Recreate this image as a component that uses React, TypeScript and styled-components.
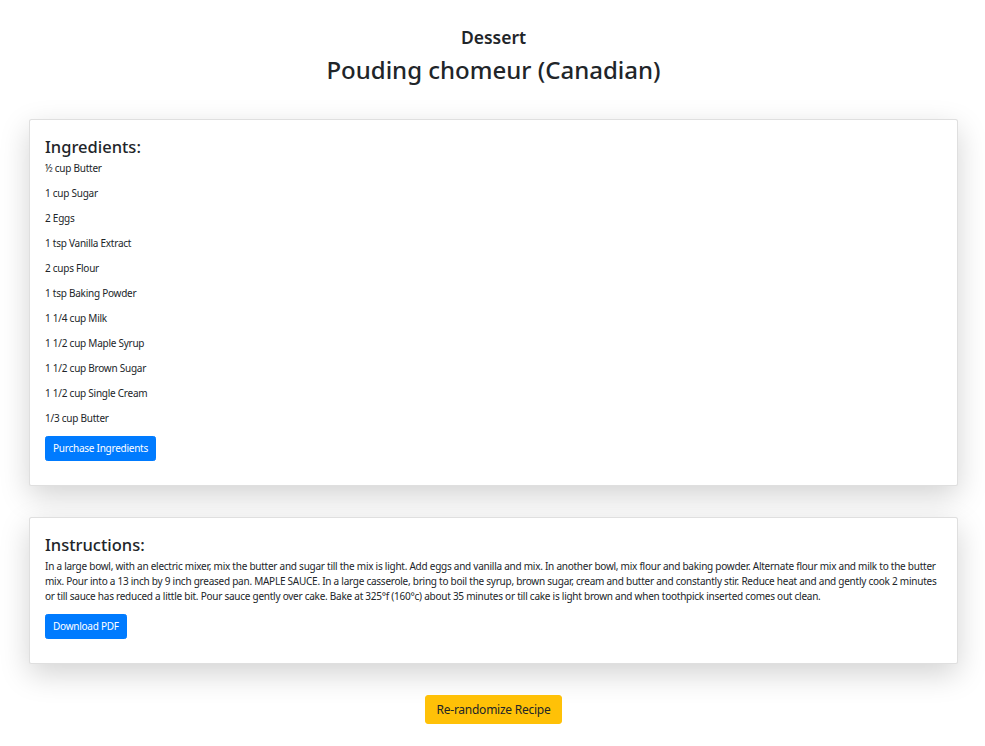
import styled, { createGlobalStyle } from 'styled-components';

const GlobalStyle = createGlobalStyle`
  html, body {
    margin: 0;
    padding: 0;
    background: #fff;
  }
  body {
    font-family: "Noto Sans", "Open Sans", sans-serif;
    color: #212529;
    font-size: 10px;
    line-height: 1.5;
  }
`;

const Page = styled.div`
  padding: 27px 27px 22px 29px;
  display: flex;
  flex-direction: column;
  align-items: stretch;
`;

const Header = styled.header`
  text-align: center;
  margin-bottom: 34px;
`;

const Category = styled.h3`
  margin: 0 0 7px;
  font-size: 17.5px;
  font-weight: 600;
  line-height: 1.2;
`;

const Title = styled.h1`
  margin: 0;
  font-size: 24px;
  font-weight: 500;
  line-height: 30px;
`;

const Card = styled.section`
  background: #fff;
  border: 1px solid rgba(0, 0, 0, 0.125);
  border-radius: 2.5px;
  box-shadow: 0 10px 30px rgba(0, 0, 0, 0.175);
  padding: 16px 15px 14px;
  margin-bottom: 31px;
`;

const CardTitle = styled.h3`
  margin: 0 0 4px;
  font-size: 16.5px;
  font-weight: 500;
  line-height: 21px;
`;

const Text = styled.p`
  margin: 0 0 10px;
  font-size: 10px;
  line-height: 15px;
  letter-spacing: -0.25px;
`;

const ButtonRow = styled.div`
  margin-bottom: 10px;
`;

const Button = styled.button<{ $variant?: 'primary' | 'warning'; $large?: boolean }>`
  font-family: inherit;
  display: inline-block;
  border: 1px solid ${(p) => (p.$variant === 'warning' ? '#ffc107' : '#007bff')};
  background: ${(p) => (p.$variant === 'warning' ? '#ffc107' : '#007bff')};
  color: ${(p) => (p.$variant === 'warning' ? '#212529' : '#fff')};
  font-size: ${(p) => (p.$large ? '12px' : '10px')};
  line-height: ${(p) => (p.$large ? '18px' : '15px')};
  letter-spacing: -0.25px;
  padding: ${(p) => (p.$large ? '4.5px 10.5px' : '4px 7px')};
  border-radius: ${(p) => (p.$large ? '3px' : '2.5px')};
  cursor: pointer;
`;

const Footer = styled.div`
  display: flex;
  justify-content: center;
`;

const ingredients = [
  '½ cup Butter',
  '1 cup Sugar',
  '2 Eggs',
  '1 tsp Vanilla Extract',
  '2 cups Flour',
  '1 tsp Baking Powder',
  '1 1/4 cup Milk',
  '1 1/2 cup Maple Syrup',
  '1 1/2 cup Brown Sugar',
  '1 1/2 cup Single Cream',
  '1/3 cup Butter',
];

const instructions =
  'In a large bowl, with an electric mixer, mix the butter and sugar till the mix is light. Add eggs and vanilla and mix. In another bowl, mix flour and baking powder. Alternate flour mix and milk to the butter mix. Pour into a 13 inch by 9 inch greased pan. MAPLE SAUCE. In a large casserole, bring to boil the syrup, brown sugar, cream and butter and constantly stir. Reduce heat and and gently cook 2 minutes or till sauce has reduced a little bit. Pour sauce gently over cake. Bake at 325°f (160°c) about 35 minutes or till cake is light brown and when toothpick inserted comes out clean.';

const App = () => {
  return (
    <>
      <GlobalStyle />
      <Page>
        <Header>
          <Category>Dessert</Category>
          <Title>Pouding chomeur (Canadian)</Title>
        </Header>

        <Card>
          <CardTitle>Ingredients:</CardTitle>
          {ingredients.map((item) => (
            <Text key={item}>{item}</Text>
          ))}
          <ButtonRow>
            <Button $variant="primary">Purchase Ingredients</Button>
          </ButtonRow>
        </Card>

        <Card>
          <CardTitle>Instructions:</CardTitle>
          <Text>{instructions}</Text>
          <ButtonRow>
            <Button $variant="primary">Download PDF</Button>
          </ButtonRow>
        </Card>

        <Footer>
          <Button $variant="warning" $large>
            Re-randomize Recipe
          </Button>
        </Footer>
      </Page>
    </>
  );
};

export default App;
